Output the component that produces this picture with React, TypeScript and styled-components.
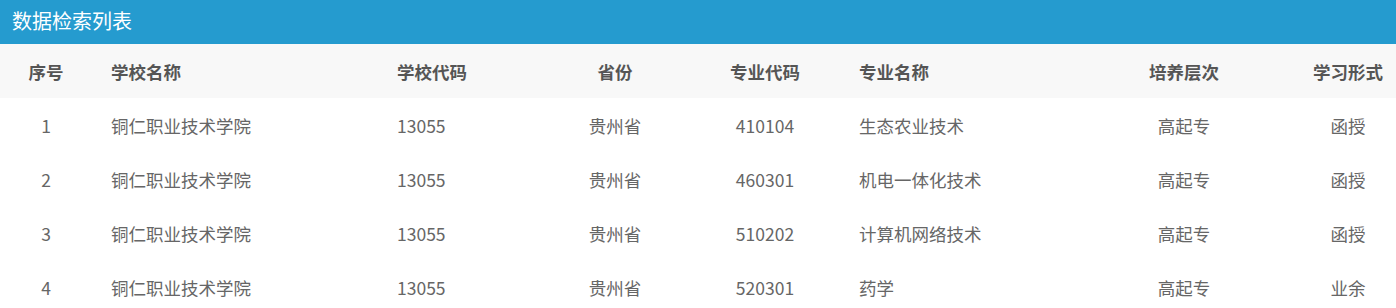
import React from "react";
import styled, { createGlobalStyle } from "styled-components";

const Global = createGlobalStyle`
  html, body { margin: 0; padding: 0; background: #fff; }
  body { font-family: "Noto Sans CJK SC", "Noto Sans", sans-serif; }
`;

const Panel = styled.section`
  width: 1396px;
`;

const TitleBar = styled.div`
  height: 44px;
  background: #259bcf;
  color: #fff;
  font-size: 20px;
  line-height: 42px;
  padding-left: 12px;
  box-sizing: border-box;
`;

const COLS = "92px 286px 162px 150px 150px 228px 232px 96px";

const Row = styled.div<{ $head?: boolean }>`
  display: grid;
  grid-template-columns: ${COLS};
  height: 54px;
  align-items: center;
  background: ${(p) => (p.$head ? "#f8f8f8" : "#fff")};
  color: ${(p) => (p.$head ? "#555" : "#666")};
  font-weight: ${(p) => (p.$head ? 700 : 400)};
  font-size: 17.5px;
`;

const Cell = styled.div<{ $align: "left" | "center" }>`
  text-align: ${(p) => p.$align};
  padding-left: ${(p) => (p.$align === "left" ? "19px" : "0")};
  white-space: nowrap;
`;

const aligns: ("left" | "center")[] = [
  "center",
  "left",
  "left",
  "center",
  "center",
  "left",
  "center",
  "center",
];

const headers = ["序号", "学校名称", "学校代码", "省份", "专业代码", "专业名称", "培养层次", "学习形式"];

const rows = [
  ["1", "铜仁职业技术学院", "13055", "贵州省", "410104", "生态农业技术", "高起专", "函授"],
  ["2", "铜仁职业技术学院", "13055", "贵州省", "460301", "机电一体化技术", "高起专", "函授"],
  ["3", "铜仁职业技术学院", "13055", "贵州省", "510202", "计算机网络技术", "高起专", "函授"],
  ["4", "铜仁职业技术学院", "13055", "贵州省", "520301", "药学", "高起专", "业余"],
];

export default function App() {
  return (
    <>
      <Global />
      <Panel>
        <TitleBar>数据检索列表</TitleBar>
        <Row $head>
          {headers.map((h, i) => (
            <Cell key={i} $align={aligns[i]}>
              {h}
            </Cell>
          ))}
        </Row>
        {rows.map((r, ri) => (
          <Row key={ri}>
            {r.map((c, i) => (
              <Cell key={i} $align={aligns[i]}>
                {c}
              </Cell>
            ))}
          </Row>
        ))}
      </Panel>
    </>
  );
}
